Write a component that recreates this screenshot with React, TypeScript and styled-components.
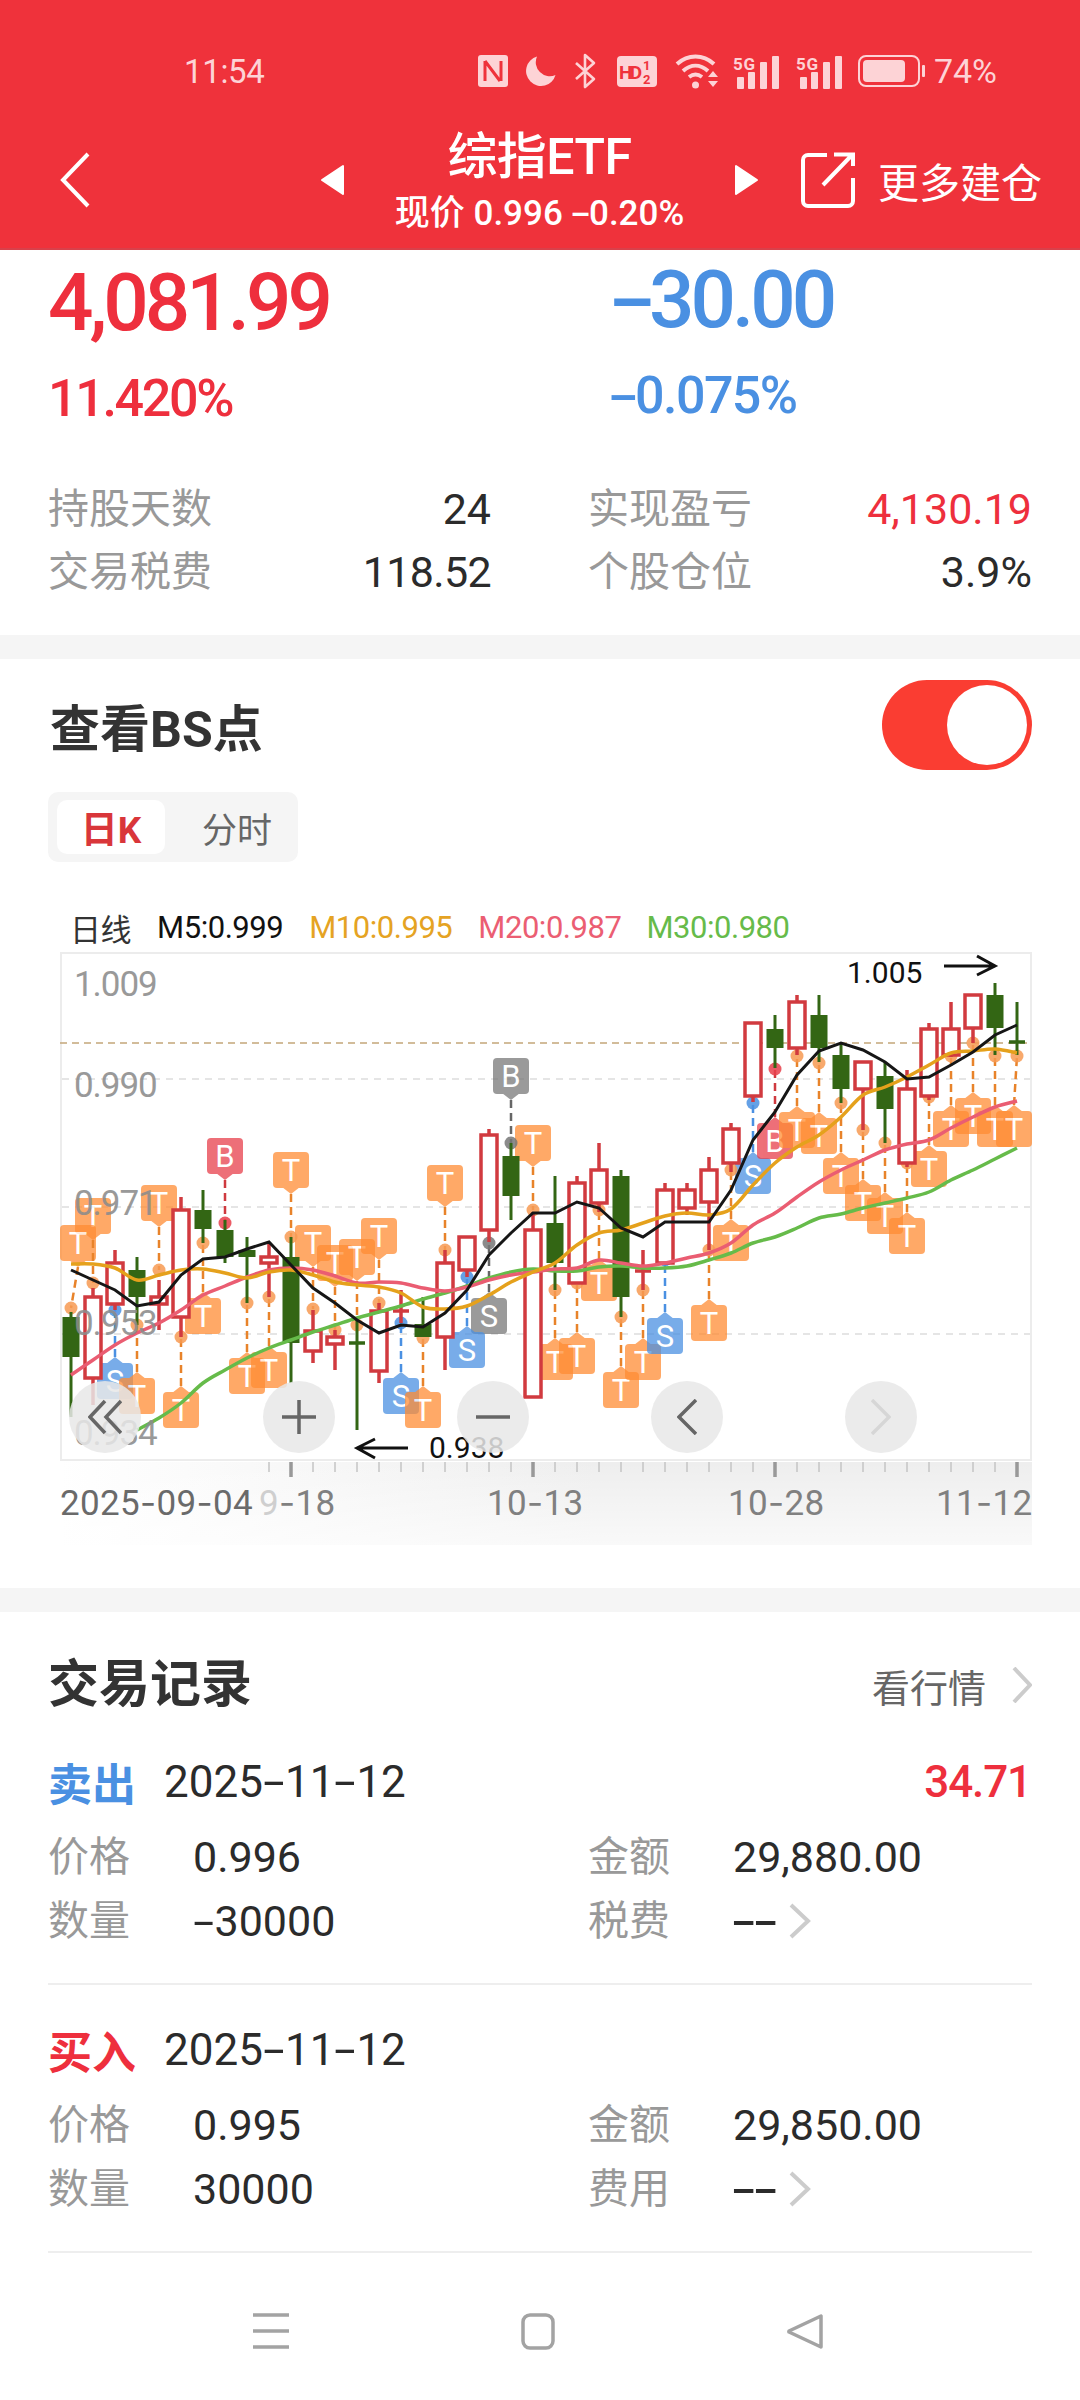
import React from 'react';
import styled, { createGlobalStyle } from 'styled-components';

const FONT = `Roboto, "Noto Sans CJK SC", sans-serif`;
const RED = '#ee2f3d';
const BLUE = '#4a90e2';

const Global = createGlobalStyle`
  html, body { margin: 0; padding: 0; background: #fff; }
  * { box-sizing: border-box; }
`;

const Page = styled.div`
  width: 1080px; height: 2400px; display: flex; flex-direction: column;
  background: #fff; overflow: hidden; font-family: ${FONT}; color: #2b2b2b;
`;

/* ---------- header ---------- */
const Header = styled.header`
  height: 250px; flex: none; background: #ef323b; border-bottom: 2px solid #d9404a;
`;
const StatusBar = styled.div`
  height: 110px; padding: 32px 83px 0 184px; display: flex; align-items: center; color: #fdd3d6;
`;
const Clock = styled.span`
  font-size: 33px; letter-spacing: -0.01em; flex: 1; padding-top: 1px;
`;
const StatusIcon = styled.svg<{ $ml: number }>`
  margin-left: ${p => p.$ml}px; flex: none; display: block;
`;
const Battery = styled.span`
  font-size: 34px; margin-left: 8px; letter-spacing: 0;
`;
const NavRow = styled.div`
  height: 138px; padding: 0 0 0 60px; display: flex; align-items: center; color: #fff;
`;
const BackIcon = styled.svg`
  margin-top: 2px; flex: none;
`;
const Arrow = styled.svg<{ $ml: number }>`
  margin: 2px 0 0 ${p => p.$ml}px; flex: none;
`;
const TitleBox = styled.div`
  width: 391px; flex: none; align-self: flex-start; padding-top: 21px; text-align: center;
`;
const Title = styled.div`
  font-size: 50px; line-height: 52px; font-weight: 500; letter-spacing: -0.01em;
`;
const SubTitle = styled.div`
  font-size: 35px; line-height: 40px; margin-top: 11px; font-weight: 500; letter-spacing: 0; white-space: nowrap;
`;
const Action = styled.div`
  margin: 2px 0 0 42px; display: flex; align-items: center; gap: 23px; font-size: 41px; white-space: nowrap;
`;

/* ---------- summary ---------- */
const Band = styled.div`
  height: 24px; flex: none; background: #f5f5f5;
`;
const Summary = styled.section`
  height: 385px; flex: none; padding: 13px 48px 0;
`;
const TopGrid = styled.div`
  display: grid; grid-template-columns: 443px 442px; column-gap: 97px;
`;
const TopCol = styled.div<{ $shift?: boolean }>`
  display: flex; flex-direction: column; gap: 30px;
  ${p => p.$shift ? 'margin-top: -3px; padding-left: 21px;' : ''}
`;
const Num = styled.span<{ $size: number; $color?: string; $weight?: number; $ls?: number }>`
  font-size: ${p => p.$size}px; line-height: ${p => p.$size}px;
  color: ${p => p.$color || '#2b2b2b'}; font-weight: ${p => p.$weight || 400};
  letter-spacing: ${p => p.$ls ?? 0}em; white-space: nowrap;
`;
const Dash = styled.span`
  display: inline-block; width: 0.5em; text-align: center; transform: scaleX(1.75);
`;
const StatGrid = styled.div`
  margin-top: 53px; display: grid; grid-template-columns: 443px 444px; column-gap: 97px;
`;
const StatRow = styled.div`
  height: 63px; display: flex; align-items: center; justify-content: space-between;
`;
const Label = styled.span`
  font-size: 41px; color: #999; line-height: 1; white-space: nowrap;
`;

/* ---------- BS section ---------- */
const BsSection = styled.section`
  flex: none; height: 929px; padding-top: 21px;
`;
const BsHead = styled.div`
  display: flex; align-items: center; justify-content: space-between; padding: 0 48px 0 50px; height: 90px;
`;
const SectionTitle = styled.h2`
  margin: 0; padding-top: 10px; font-size: 50px; line-height: 50px; font-weight: 700; color: #333;
`;
const Toggle = styled.div`
  width: 150px; height: 90px; border-radius: 45px; background: #fa3d32; padding: 5px; display: flex; justify-content: flex-end;
`;
const Knob = styled.div`
  width: 80px; height: 80px; border-radius: 50%; background: #fff;
`;
const Tabs = styled.div`
  margin: 22px 0 0 48px; width: 250px; height: 70px; border-radius: 10px; background: #f5f5f5;
  padding: 8px 9px; display: flex; align-items: center;
`;
const Tab = styled.div<{ $active?: boolean }>`
  height: 54px; display: flex; align-items: center; justify-content: center; border-radius: 10px;
  width: ${p => p.$active ? 108 : 124}px; padding-left: ${p => p.$active ? 0 : 20}px;
  font-size: ${p => p.$active ? 37 : 35}px; flex: none;
  background: ${p => p.$active ? '#fff' : 'transparent'};
  color: ${p => p.$active ? '#d9363a' : '#666'}; font-weight: ${p => p.$active ? 700 : 400};
`;
const Legend = styled.div`
  margin-top: 51px; height: 28px; padding-left: 70px; display: flex; align-items: center; font-size: 31px; white-space: nowrap; letter-spacing: -0.015em;
`;
const LegendItem = styled.span<{ $color: string; $ml: number }>`
  color: ${p => p.$color}; margin-left: ${p => p.$ml}px;
`;
const ChartBox = styled.div`
  position: relative; width: 1080px; height: 619px;
`;
const ChartSvg = styled.svg`
  display: block;
`;
const Controls = styled.div`
  position: absolute; left: 69px; top: 440px; display: flex; gap: 122px;
`;
const RoundBtn = styled.div`
  width: 72px; height: 72px; border-radius: 50%; background: rgba(232, 232, 232, 0.85);
  display: flex; align-items: center; justify-content: center;
`;
const TagText = styled.text`
  font-family: ${FONT}; font-size: 31px; fill: #fff; text-anchor: middle;
`;
const YText = styled.text`
  font-family: ${FONT}; font-size: 35px; fill: #8c8c8c; letter-spacing: -0.03em; opacity: .88;
`;
const MarkText = styled.text`
  font-family: ${FONT}; font-size: 30px; fill: #111;
`;
const AxisText = styled.text<{ $dark?: boolean }>`
  font-family: ${FONT}; font-size: 35px; fill: ${p => p.$dark ? '#6a6a6a' : '#808080'}; letter-spacing: 0.01em;
`;
const DashSpan = styled.tspan`
  font-family: Inter, sans-serif;
`;

/* ---------- trades ---------- */
const Trades = styled.section`
  flex: none; padding: 48px 48px 0;
`;
const TradeHead = styled.div`
  display: flex; justify-content: space-between; align-items: center; height: 50px;
`;
const TradeTitle = styled.h2`
  margin: 0; font-size: 51px; line-height: 50px; font-weight: 700; color: #333;
`;
const MoreLink = styled.div`
  display: flex; align-items: center; gap: 26px; font-size: 38px; color: #666;
`;
const Record = styled.div<{ $first?: boolean }>`
  padding: ${p => p.$first ? 45 : 38}px 0 30px; border-bottom: 2px solid #eeeeee;
`;
const RecordHead = styled.div`
  height: 50px; display: flex; align-items: center;
`;
const Side = styled.span<{ $color: string }>`
  font-size: 44px; font-weight: 700; color: ${p => p.$color}; padding-top: 4px; width: 116px; flex: none;
`;
const DateText = styled(Num)`
  padding-top: 3px;
`;
const Profit = styled(Num)`
  margin-left: auto; margin-right: 1px; padding-top: 3px;
`;
const RecordGrid = styled.div`
  margin-top: 20px; display: grid; grid-template-columns: 443px 442px; column-gap: 97px; grid-auto-rows: 64px;
`;
const Cell = styled.div`
  display: flex; align-items: center;
`;
const CellLabel = styled(Label)`
  width: 145px; flex: none;
`;
const Chevron = styled.svg<{ $ml?: number }>`
  flex: none; margin-left: ${p => p.$ml || 0}px;
`;

/* ---------- bottom nav ---------- */
const BottomNav = styled.nav`
  flex: 1; padding: 60px 4px 0 0; display: flex; justify-content: center; align-items: flex-start;
`;
const NavCell = styled.div`
  width: 267px; display: flex; justify-content: center;
`;

/* ---------- chart data ---------- */
type Candle = ['r' | 'g', number, number, number, number];
const candles: Candle[] = [
  ['g', 1312, 1317, 1357, 1417], ['r', 1288, 1297, 1378, 1405], ['r', 1250, 1263, 1304, 1310], ['g', 1257, 1270, 1297, 1325],
  ['r', 1280, 1297, 1304, 1330], ['r', 1197, 1210, 1317, 1337], ['g', 1190, 1210, 1229, 1243], ['g', 1220, 1230, 1257, 1263],
  ['g', 1237, 1250, 1257, 1303], ['r', 1242, 1257, 1263, 1297], ['g', 1237, 1257, 1343, 1383], ['r', 1310, 1331, 1351, 1363],
  ['r', 1330, 1337, 1344, 1370], ['g', 1320, 1343, 1343, 1430], ['r', 1303, 1311, 1371, 1383], ['r', 1290, 1311, 1311, 1323],
  ['g', 1297, 1324, 1337, 1337], ['r', 1250, 1263, 1337, 1370], ['r', 1237, 1237, 1270, 1277], ['r', 1129, 1135, 1230, 1242],
  ['g', 1143, 1156, 1196, 1220], ['r', 1212, 1230, 1397, 1397], ['g', 1176, 1223, 1263, 1290], ['r', 1176, 1183, 1283, 1283],
  ['r', 1143, 1170, 1203, 1212], ['g', 1170, 1176, 1297, 1317], ['r', 1250, 1271, 1271, 1290], ['r', 1183, 1190, 1263, 1263],
  ['r', 1183, 1190, 1208, 1215], ['r', 1157, 1170, 1202, 1250], ['r', 1123, 1129, 1163, 1172], ['r', 1023, 1023, 1096, 1102],
  ['g', 1015, 1029, 1048, 1068], ['r', 995, 1002, 1048, 1055], ['g', 995, 1015, 1048, 1062], ['g', 1043, 1055, 1089, 1103],
  ['r', 1062, 1062, 1089, 1130], ['g', 1062, 1076, 1109, 1143], ['r', 1070, 1089, 1163, 1167], ['r', 1023, 1029, 1096, 1100],
  ['r', 1002, 1029, 1055, 1057], ['r', 995, 995, 1028, 1043], ['g', 983, 995, 1028, 1055], ['g', 1002, 1042, 1042, 1055],
];
const cx = (i: number) => 71 + 22 * i;

type TagKey = 'o' | 'r' | 'b' | 'g';
type Tag = [number, number, 'a' | 'b', string, TagKey, number, number?];
const tags: Tag[] = [
  [225, 1138, 'a', 'B', 'r', 1223], [291, 1152, 'a', 'T', 'o', 1237], [445, 1165, 'a', 'T', 'o', 1250], [511, 1058, 'a', 'B', 'g', 1143],
  [533, 1125, 'a', 'T', 'o', 1210], [159, 1185, 'a', 'T', 'o', 1270], [93, 1198, 'a', 'T', 'o', 1283], [78, 1225, 'a', 'T', 'o', 1308, 71],
  [313, 1225, 'a', 'T', 'o', 1309], [335, 1245, 'a', 'T', 'o', 1330], [357, 1239, 'a', 'T', 'o', 1325], [379, 1218, 'a', 'T', 'o', 1303],
  [489, 1298, 'b', 'S', 'g', 1243], [115, 1363, 'b', 'S', 'b', 1310], [137, 1378, 'b', 'T', 'o', 1325], [181, 1392, 'b', 'T', 'o', 1337],
  [203, 1298, 'b', 'T', 'o', 1243], [247, 1358, 'b', 'T', 'o', 1303], [269, 1352, 'b', 'T', 'o', 1297], [401, 1378, 'b', 'S', 'b', 1323],
  [423, 1392, 'b', 'T', 'o', 1338], [467, 1332, 'b', 'S', 'b', 1277], [555, 1344, 'b', 'T', 'o', 1290], [577, 1338, 'b', 'T', 'o', 1283],
  [599, 1265, 'b', 'T', 'o', 1210], [621, 1372, 'b', 'T', 'o', 1317], [643, 1344, 'b', 'T', 'o', 1290], [665, 1318, 'b', 'S', 'b', 1260],
  [709, 1305, 'b', 'T', 'o', 1250], [731, 1225, 'b', 'T', 'o', 1170], [753, 1158, 'b', 'S', 'b', 1103], [775, 1123, 'b', 'B', 'r', 1069],
  [797, 1112, 'b', 'T', 'o', 1056], [819, 1118, 'b', 'T', 'o', 1063], [841, 1158, 'b', 'T', 'o', 1103], [863, 1185, 'b', 'T', 'o', 1130],
  [885, 1198, 'b', 'T', 'o', 1143], [907, 1218, 'b', 'T', 'o', 1163], [929, 1151, 'b', 'T', 'o', 1097], [951, 1111, 'b', 'T', 'o', 1056],
  [973, 1098, 'b', 'T', 'o', 1043], [995, 1111, 'b', 'T', 'o', 1056], [1014, 1111, 'b', 'T', 'o', 1056, 1017],
];
const tagFill: Record<TagKey, string> = { o: '#ff8c33', r: '#e83e4a', b: '#4a90e2', g: '#777777' };
const tagLine: Record<TagKey, string> = { o: '#e8832a', r: '#cf3a3f', b: '#4a90e2', g: '#666666' };

const m5 = [1270, 1280, 1290, 1306, 1302, 1275, 1259, 1257, 1249, 1242, 1265, 1288, 1303, 1320, 1333, 1325, 1327, 1313, 1290, 1255, 1233, 1213, 1213, 1202, 1208, 1228, 1237, 1222, 1222, 1222, 1190, 1140, 1112, 1075, 1051, 1043, 1050, 1062, 1079, 1077, 1065, 1052, 1035, 1025];
const m10 = [1264, 1264, 1268, 1280, 1275, 1270, 1269, 1273, 1278, 1272, 1270, 1275, 1282, 1285, 1287, 1293, 1307, 1309, 1306, 1295, 1282, 1272, 1263, 1245, 1233, 1230, 1223, 1216, 1213, 1215, 1209, 1185, 1163, 1147, 1135, 1117, 1095, 1087, 1077, 1065, 1053, 1051, 1049, 1053];
const m20 = [1375, 1360, 1345, 1333, 1323, 1310, 1295, 1286, 1277, 1270, 1268, 1270, 1276, 1283, 1282, 1283, 1288, 1291, 1287, 1280, 1275, 1272, 1269, 1268, 1260, 1263, 1266, 1263, 1258, 1253, 1243, 1225, 1213, 1197, 1182, 1170, 1160, 1150, 1144, 1140, 1128, 1117, 1107, 1101];
const m30 = [1430, 1418, 1403, 1383, 1370, 1358, 1348, 1340, 1332, 1325, 1318, 1312, 1306, 1299, 1293, 1286, 1278, 1272, 1269, 1271, 1271, 1267, 1266, 1268, 1268, 1266, 1260, 1253, 1243, 1237, 1228, 1218, 1214, 1208, 1203, 1198, 1192, 1180, 1170, 1159, 1148];

const straight = (ys: number[], start = 0) =>
  ys.map((y, i) => `${i ? 'L' : 'M'}${cx(i + start)} ${y}`).join(' ');
const smooth = (ys: number[], start = 0) => {
  const pts = ys.map((y, i) => [cx(i + start), y]);
  let d = `M${pts[0][0]} ${pts[0][1]}`;
  for (let i = 0; i < pts.length - 1; i++) {
    const p0 = pts[Math.max(i - 1, 0)], p1 = pts[i], p2 = pts[i + 1], p3 = pts[Math.min(i + 2, pts.length - 1)];
    d += ` C${p1[0] + (p2[0] - p0[0]) / 6} ${p1[1] + (p2[1] - p0[1]) / 6} ${p2[0] - (p3[0] - p1[0]) / 6} ${p2[1] - (p3[1] - p1[1]) / 6} ${p2[0]} ${p2[1]}`;
  }
  return d;
};

const withDash = (s: string) => {
  const parts = s.split('-');
  return parts.map((p, i) => (
    <React.Fragment key={i}>{i > 0 && <Dash>-</Dash>}{p}</React.Fragment>
  ));
};
const svgDash = (s: string) => {
  const parts = s.split('-');
  return parts.map((p, i) => (
    <React.Fragment key={i}>{i > 0 && <DashSpan>-</DashSpan>}{p}</React.Fragment>
  ));
};

const TagMark: React.FC<{ t: Tag }> = ({ t }) => {
  const [x, top, pos, letter, key] = t;
  const tail = pos === 'a'
    ? `M${x - 9} ${top + 35} L${x} ${top + 42} L${x + 9} ${top + 35} Z`
    : `M${x - 9} ${top + 1} L${x} ${top - 6} L${x + 9} ${top + 1} Z`;
  return (
    <g opacity={0.74}>
      <rect x={x - 18} y={top} width={36} height={36} rx={4} fill={tagFill[key]} />
      <path d={tail} fill={tagFill[key]} />
      <TagText x={x} y={top + 29}>{letter}</TagText>
    </g>
  );
};

const Tether: React.FC<{ t: Tag }> = ({ t }) => {
  const [x, top, pos, , key, dotY, dotX] = t;
  const dx = dotX ?? x;
  const y2 = pos === 'a' ? top + 42 : top - 6;
  return (
    <g>
      <line x1={x} y1={y2} x2={dx} y2={dotY} stroke={tagLine[key]} strokeWidth={2.5} strokeDasharray="8 5" />
      <circle cx={dx} cy={dotY} r={6.5} fill={key === 'o' ? '#f79a52' : tagFill[key]} opacity={0.85} />
    </g>
  );
};

const CandleMark: React.FC<{ c: Candle; x: number }> = ({ c, x }) => {
  const [type, wt, bt, bb, wb] = c;
  const color = type === 'r' ? '#d13a3f' : '#336614';
  const wick = <line x1={x} x2={x} y1={wt} y2={wb} stroke={color} strokeWidth={type === 'r' ? 3.5 : 3} />;
  if (bt === bb) {
    return <g>{wick}<line x1={x - 8} x2={x + 8} y1={bt} y2={bt} stroke={color} strokeWidth={3.5} /></g>;
  }
  return (
    <g>
      {wick}
      {type === 'r'
        ? <rect x={x - 8} y={bt} width={16} height={bb - bt} fill="#fff" stroke={color} strokeWidth={3.5} />
        : <rect x={x - 8.5} y={bt} width={17} height={bb - bt} fill={color} />}
    </g>
  );
};

const Chart = () => {
  const ticks = Array.from({ length: 35 }, (_, i) => 269 + 22 * i);
  const majors = [291, 533, 775, 1017];
  return (
    <ChartSvg width={1080} height={619} viewBox="0 941 1080 619">
      <defs>
        <linearGradient id="footH" x1="0" x2="1" y1="0" y2="0">
          <stop offset="0" stopColor="#fff" />
          <stop offset="0.55" stopColor="#eeeeee" />
          <stop offset="1" stopColor="#eeeeee" />
        </linearGradient>
        <linearGradient id="footV" x1="0" x2="0" y1="0" y2="1">
          <stop offset="0" stopColor="#fff" stopOpacity="0" />
          <stop offset="1" stopColor="#fff" stopOpacity="0.65" />
        </linearGradient>
      </defs>
      <rect x={60} y={1462} width={972} height={83} fill="url(#footH)" />
      <rect x={60} y={1462} width={972} height={83} fill="url(#footV)" />
      <rect x={61} y={953} width={970} height={507} fill="#fff" stroke="#ececec" strokeWidth={2} />
      {[1079, 1207, 1334].map(y => (
        <line key={y} x1={62} x2={1030} y1={y} y2={y} stroke="#dddddd" strokeWidth={1.5} strokeDasharray="7 6" />
      ))}
      <line x1={60} x2={1032} y1={1043} y2={1043} stroke="#c4a679" strokeWidth={1.6} strokeDasharray="7 5" />

      {tags.map((t, i) => <TagMark key={i} t={t} />)}
      {tags.map((t, i) => <Tether key={i} t={t} />)}
      {candles.map((c, i) => <CandleMark key={i} c={c} x={cx(i)} />)}

      <path d={smooth(m30, 3)} fill="none" stroke="#66bb4a" strokeWidth={3.5} />
      <path d={smooth(m20)} fill="none" stroke="#ea5d72" strokeWidth={3.5} />
      <path d={smooth(m10)} fill="none" stroke="#e5a11c" strokeWidth={3.5} />
      <path d={straight(m5)} fill="none" stroke="#161616" strokeWidth={3} />

      <YText x={74} y={996}>1.009</YText>
      <YText x={74} y={1097}>0.990</YText>
      <YText x={74} y={1215}>0.971</YText>
      <YText x={74} y={1335}>0.953</YText>
      <YText x={74} y={1445}>0.934</YText>

      <MarkText x={847} y={983}>1.005</MarkText>
      <path d="M944 966 H994 M977 956 L995 966 L977 975" fill="none" stroke="#111" strokeWidth={3} />
      <path d="M408 1448 H358 M375 1439 L357 1448 L375 1458" fill="none" stroke="#111" strokeWidth={3} />
      <MarkText x={429} y={1458}>0.938</MarkText>

      {ticks.map(x => majors.includes(x)
        ? <line key={x} x1={x} x2={x} y1={1462} y2={1477} stroke="#999" strokeWidth={3.5} />
        : <line key={x} x1={x} x2={x} y1={1462} y2={1472} stroke="#c4c4c4" strokeWidth={1.5} />)}

      <AxisText $dark x={60} y={1515}>{svgDash('2025-09-04')}</AxisText>
      <AxisText x={259} y={1515}><tspan fill="#cfcfcf">9</tspan>{svgDash('-18')}</AxisText>
      <AxisText x={487} y={1515}>{svgDash('10-13')}</AxisText>
      <AxisText x={728} y={1515}>{svgDash('10-28')}</AxisText>
      <AxisText x={936} y={1515}>{svgDash('11-12')}</AxisText>
    </ChartSvg>
  );
};

const pink = '#fdd3d6';
const bg = '#ef323b';

const RecordBlock: React.FC<{ side: string; color: string; date: string; profit?: string; price: string; amount: string; qty: string; feeLabel: string; first?: boolean }> = p => (
  <Record $first={p.first}>
    <RecordHead>
      <Side $color={p.color}>{p.side}</Side>
      <DateText $size={44}>{withDash(p.date)}</DateText>
      {p.profit && <Profit $size={44} $color={RED} $weight={500} $ls={-0.025}>{p.profit}</Profit>}
    </RecordHead>
    <RecordGrid>
      <Cell><CellLabel>价格</CellLabel><Num $size={43}>{p.price}</Num></Cell>
      <Cell><CellLabel>金额</CellLabel><Num $size={43}>{p.amount}</Num></Cell>
      <Cell><CellLabel>数量</CellLabel><Num $size={43}>{withDash(p.qty)}</Num></Cell>
      <Cell>
        <CellLabel>{p.feeLabel}</CellLabel>
        <Num $size={43} $weight={500}>{withDash('--')}</Num>
        <Chevron $ml={13} width="22" height="36" viewBox="0 0 22 36"><path d="M2 2 L19 18 L2 34" fill="none" stroke="#ccc" strokeWidth="4" /></Chevron>
      </Cell>
    </RecordGrid>
  </Record>
);

export default function App() {
  return (
    <Page>
      <Global />
      <Header>
        <StatusBar>
          <Clock>11:54</Clock>
          <StatusIcon $ml={0} width="30" height="32" viewBox="0 0 30 32">
            <rect width="30" height="32" rx="3" fill={pink} />
            <path d="M7 6 V26 M7 6 L22 26 M23 26 V6" fill="none" stroke={bg} strokeWidth="3" />
          </StatusIcon>
          <StatusIcon $ml={18} width="30" height="32" viewBox="0 0 30 32">
            <path d="M11 1.500 A15 15 0 1 0 29.500 20 A14 14 0 0 1 11 1.500 Z" fill={pink} />
          </StatusIcon>
          <StatusIcon $ml={18} width="22" height="36" viewBox="0 0 22 36">
            <path d="M2 10 L20 26 L11 34 V2 L20 10 L2 26" fill="none" stroke={pink} strokeWidth="2.6" strokeLinejoin="round" />
          </StatusIcon>
          <StatusIcon $ml={21} width="40" height="31" viewBox="0 0 40 31">
            <rect width="40" height="31" rx="4" fill={pink} />
            <text x="2" y="23" fontSize="19" fontWeight="700" fontFamily={FONT} fill={bg} textLength="23">HD</text>
            <text x="26" y="14" fontSize="13" fontWeight="700" fontFamily={FONT} fill={bg}>1</text>
            <text x="26" y="28" fontSize="13" fontWeight="700" fontFamily={FONT} fill={bg}>2</text>
          </StatusIcon>
          <StatusIcon $ml={18} width="45" height="36" viewBox="0 0 45 36">
            <path d="M2 11 C13 1 28 1 39 11 M8 18 C16 11 25 11 33 18 M14 24 C18 21 23 21 27 24" fill="none" stroke={pink} strokeWidth="4" />
            <circle cx="20.500" cy="32" r="3.500" fill={pink} />
            <path d="M33 24 L38 18 L43 24 Z M33 28 L43 28 L38 34 Z" fill={pink} />
          </StatusIcon>
          {[13, 17].map(ml => (
            <StatusIcon key={ml} $ml={ml} width="46" height="36" viewBox="0 0 46 36">
              <text x="0" y="17" fontSize="17" fontWeight="700" fontFamily={FONT} fill={pink} textLength="22">5G</text>
              <rect x="4" y="24" width="7" height="12" rx="1" fill={pink} />
              <rect x="15" y="19" width="7" height="17" rx="1" fill={pink} />
              <rect x="27" y="9" width="7" height="27" rx="1" fill={pink} />
              <rect x="39" y="3" width="7" height="33" rx="1" fill={pink} />
            </StatusIcon>
          ))}
          <StatusIcon $ml={16} width="68" height="32" viewBox="0 0 68 32">
            <rect x="1" y="1" width="60" height="30" rx="7" fill="none" stroke={pink} strokeWidth="2" />
            <rect x="5" y="5" width="42" height="22" rx="4" fill={pink} />
            <rect x="64" y="10" width="3" height="12" rx="1" fill={pink} />
          </StatusIcon>
          <Battery>74%</Battery>
        </StatusBar>
        <NavRow>
          <BackIcon width="30" height="56" viewBox="0 0 30 56"><path d="M28 2 L3 28 L28 54" fill="none" stroke="#fff" strokeWidth="4" /></BackIcon>
          <Arrow $ml={230} width="24" height="32" viewBox="0 0 24 32"><path d="M23 2 V30 L2 16 Z" fill="#fff" stroke="#fff" strokeWidth="2" strokeLinejoin="round" /></Arrow>
          <TitleBox>
            <Title>综指ETF</Title>
            <SubTitle>现价 0.996 {withDash('-0.20%')}</SubTitle>
          </TitleBox>
          <Arrow $ml={0} width="24" height="32" viewBox="0 0 24 32"><path d="M1 2 V30 L22 16 Z" fill="#fff" stroke="#fff" strokeWidth="2" strokeLinejoin="round" /></Arrow>
          <Action>
            <svg width="54" height="56" viewBox="0 0 54 56">
              <path d="M26 3 H7 a5 5 0 0 0 -5 5 V49 a5 5 0 0 0 5 5 H47 a5 5 0 0 0 5 -5 V26" fill="none" stroke="#fff" strokeWidth="4" />
              <path d="M22 33 L51 3 M33 2.500 H52 V14" fill="none" stroke="#fff" strokeWidth="4" />
            </svg>
            更多建仓
          </Action>
        </NavRow>
      </Header>

      <Summary>
        <TopGrid>
          <TopCol>
            <Num $size={80} $color={RED} $weight={500} $ls={-0.05}>4,081.99</Num>
            <Num $size={52} $color={RED} $weight={500} $ls={-0.045}>11.420%</Num>
          </TopCol>
          <TopCol $shift>
            <Num $size={80} $color={BLUE} $weight={500} $ls={-0.05}>{withDash('-30.00')}</Num>
            <Num $size={52} $color={BLUE} $weight={500} $ls={-0.03}>{withDash('-0.075%')}</Num>
          </TopCol>
        </TopGrid>
        <StatGrid>
          <StatRow><Label>持股天数</Label><Num $size={43}>24</Num></StatRow>
          <StatRow><Label>实现盈亏</Label><Num $size={43} $color={RED}>4,130.19</Num></StatRow>
          <StatRow><Label>交易税费</Label><Num $size={43} $ls={-0.015}>118.52</Num></StatRow>
          <StatRow><Label>个股仓位</Label><Num $size={43}>3.9%</Num></StatRow>
        </StatGrid>
      </Summary>
      <Band />

      <BsSection>
        <BsHead>
          <SectionTitle>查看BS点</SectionTitle>
          <Toggle><Knob /></Toggle>
        </BsHead>
        <Tabs>
          <Tab $active>日K</Tab>
          <Tab>分时</Tab>
        </Tabs>
        <Legend>
          <LegendItem $color="#333" $ml={0}>日线</LegendItem>
          <LegendItem $color="#111" $ml={26}>M5:0.999</LegendItem>
          <LegendItem $color="#e5a323" $ml={26}>M10:0.995</LegendItem>
          <LegendItem $color="#eb5e73" $ml={26}>M20:0.987</LegendItem>
          <LegendItem $color="#66bb4a" $ml={25}>M30:0.980</LegendItem>
        </Legend>
        <ChartBox>
          <Chart />
          <Controls>
            <RoundBtn>
              <svg width="34" height="36" viewBox="0 0 34 36"><path d="M17 2 L2 18 L17 34 M33 2 L18 18 L33 34" fill="none" stroke="#666" strokeWidth="3.5" /></svg>
            </RoundBtn>
            <RoundBtn>
              <svg width="34" height="34" viewBox="0 0 34 34"><path d="M0 17 H34 M17 0 V34" fill="none" stroke="#666" strokeWidth="3.5" /></svg>
            </RoundBtn>
            <RoundBtn>
              <svg width="34" height="6" viewBox="0 0 34 6"><path d="M0 3 H34" fill="none" stroke="#666" strokeWidth="3.5" /></svg>
            </RoundBtn>
            <RoundBtn>
              <svg width="20" height="36" viewBox="0 0 20 36"><path d="M19 1 L2 18 L19 35" fill="none" stroke="#666" strokeWidth="3.5" /></svg>
            </RoundBtn>
            <RoundBtn>
              <svg width="20" height="36" viewBox="0 0 20 36"><path d="M1 1 L18 18 L1 35" fill="none" stroke="#d6d6d6" strokeWidth="3.5" /></svg>
            </RoundBtn>
          </Controls>
        </ChartBox>
      </BsSection>
      <Band />

      <Trades>
        <TradeHead>
          <TradeTitle>交易记录</TradeTitle>
          <MoreLink>
            看行情
            <svg width="20" height="36" viewBox="0 0 20 36"><path d="M2 1 L18 18 L2 35" fill="none" stroke="#ccc" strokeWidth="4" /></svg>
          </MoreLink>
        </TradeHead>
        <RecordBlock first side="卖出" color={BLUE} date="2025-11-12" profit="34.71" price="0.996" amount="29,880.00" qty="-30000" feeLabel="税费" />
        <RecordBlock side="买入" color={RED} date="2025-11-12" price="0.995" amount="29,850.00" qty="30000" feeLabel="费用" />
      </Trades>

      <BottomNav>
        <NavCell>
          <svg width="36" height="36" viewBox="0 0 36 36"><path d="M0 2 H36 M0 18 H36 M0 34 H36" stroke="#a3a3a3" strokeWidth="3.5" /></svg>
        </NavCell>
        <NavCell>
          <svg width="34" height="37" viewBox="0 0 34 37"><rect x="2" y="2" width="30" height="33" rx="7" fill="none" stroke="#a3a3a3" strokeWidth="3.5" /></svg>
        </NavCell>
        <NavCell>
          <svg width="36" height="37" viewBox="0 0 36 37"><path d="M34 3 V34 L2 19 a1 1 0 0 1 0 -1 Z" fill="none" stroke="#a3a3a3" strokeWidth="3.5" strokeLinejoin="round" /></svg>
        </NavCell>
      </BottomNav>
    </Page>
  );
}
